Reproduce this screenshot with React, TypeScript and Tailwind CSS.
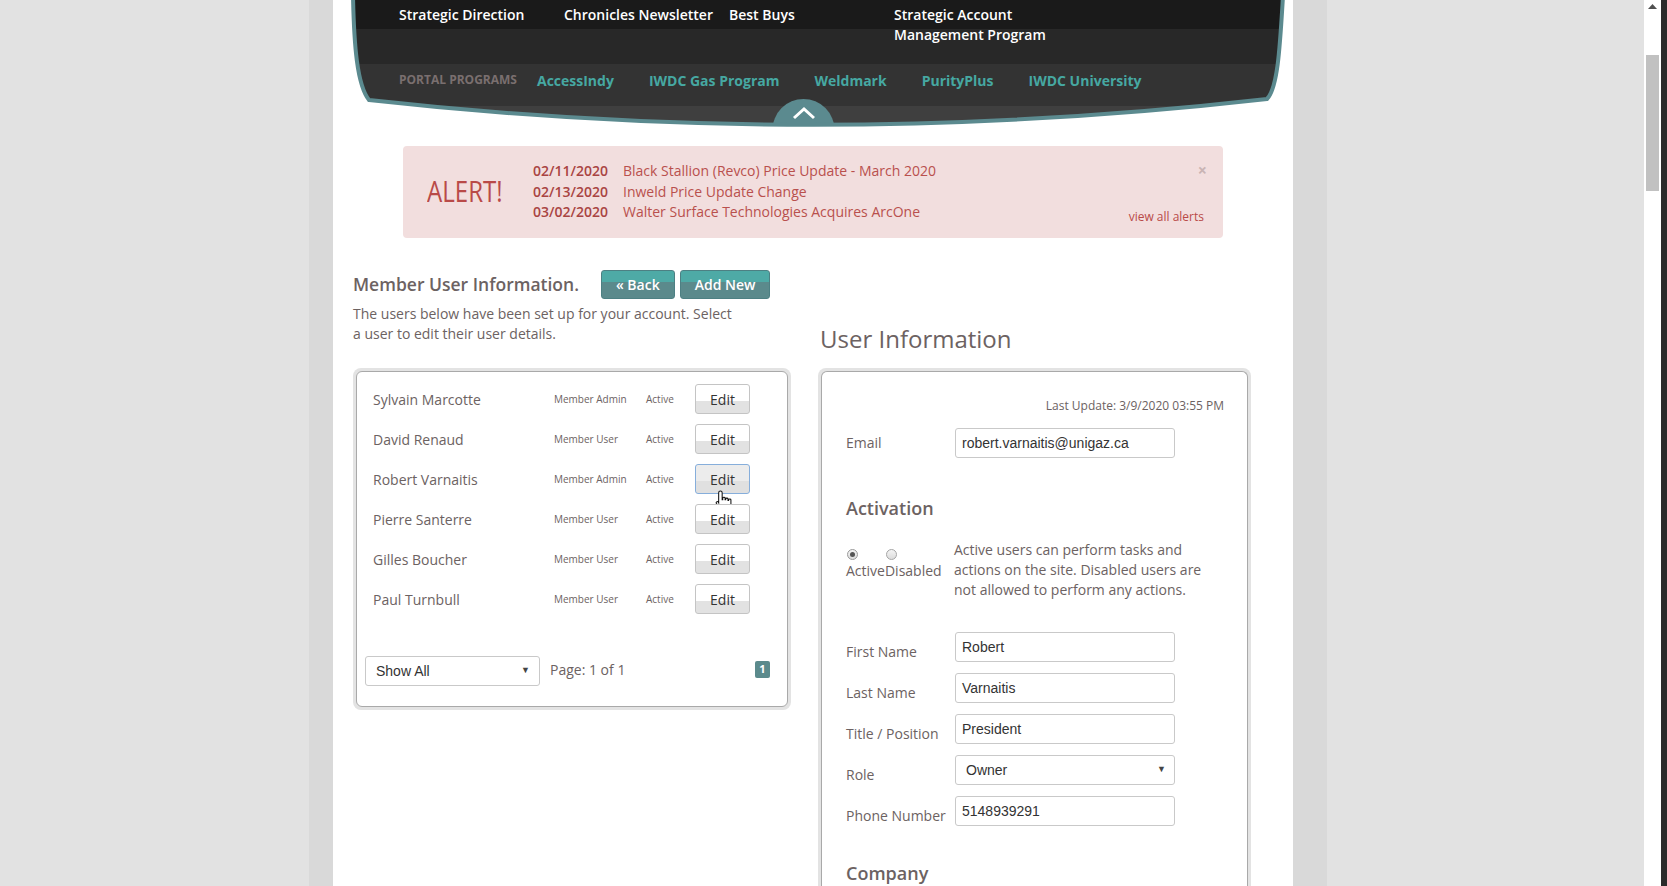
import React from 'react'

const users = [
  { name: 'Sylvain Marcotte', role: 'Member Admin' },
  { name: 'David Renaud', role: 'Member User' },
  { name: 'Robert Varnaitis', role: 'Member Admin', hover: true },
  { name: 'Pierre Santerre', role: 'Member User' },
  { name: 'Gilles Boucher', role: 'Member User' },
  { name: 'Paul Turnbull', role: 'Member User' },
]

const alerts = [
  { date: '02/11/2020', title: 'Black Stallion (Revco) Price Update - March 2020' },
  { date: '02/13/2020', title: 'Inweld Price Update Change' },
  { date: '03/02/2020', title: 'Walter Surface Technologies Acquires ArcOne' },
]

const programs = ['AccessIndy', 'IWDC Gas Program', 'Weldmark', 'PurityPlus', 'IWDC University']

const SHAPE = 'M20,-4 C21,45 24,85 36,100 Q484,150 934,99 C945,88 947,45 950,-4 Z'

function HeaderShape() {
  return (
    <svg className="absolute top-0 left-0" width="960" height="130" viewBox="0 0 960 130">
      <defs>
        <clipPath id="hdr">
          <path d={SHAPE} />
        </clipPath>
      </defs>
      <g clipPath="url(#hdr)">
        <rect x="0" y="-4" width="960" height="33" fill="#1a1a1a" />
        <rect x="0" y="29" width="960" height="35" fill="#282828" />
        <rect x="0" y="64" width="960" height="42" fill="#333333" />
        <rect x="0" y="106" width="960" height="30" fill="#3f3f3f" />
        <circle cx="470.5" cy="130" r="31" fill="#5b8a8f" />
        <polyline points="461,118 471,109 481,118" fill="none" stroke="#ffffff" strokeWidth="3" />
      </g>
      <path d={SHAPE} fill="none" stroke="#5b8a8f" strokeWidth="4" />
    </svg>
  )
}

function TealButton({ children }: { children: React.ReactNode }) {
  return (
    <button className="h-[29px] px-[14px] rounded-[3px] border border-[#4d8083] bg-[linear-gradient(to_bottom,#4eaaa6_0%,#4eaaa6_42%,#5b8a8c_42%,#5b8a8c_100%)] text-white text-[14px] font-semibold leading-none">
      {children}
    </button>
  )
}

function EditButton({ hover }: { hover?: boolean }) {
  return (
    <div className="relative">
      <button
        className={
          hover
            ? 'w-[55px] h-[30px] rounded-[3px] border border-[#86aedb] bg-[linear-gradient(to_bottom,#ececec_0%,#ececec_58%,#e0e0e0_58%,#e0e0e0_100%)] text-[14px] text-[#333]'
            : 'w-[55px] h-[30px] rounded-[3px] border border-[#c4c4c4] bg-[linear-gradient(to_bottom,#ffffff_0%,#ffffff_58%,#e2e2e2_58%,#e2e2e2_100%)] text-[14px] text-[#333]'
        }
      >
        Edit
      </button>
      {hover && (
        <svg className="absolute left-[19px] top-[25px]" width="21" height="24" viewBox="0 0 18 20">
          <path
            d="M5.5 1.5 C6.5 1.5 7 2 7 3 L7 9 L7.5 9 L7.5 7.5 C7.5 6.5 9.5 6.5 9.5 7.5 L9.5 9 L10 9 L10 8.3 C10 7.3 12 7.3 12 8.3 L12 9.5 L12.5 9.5 L12.5 9 C12.5 8 14.5 8 14.5 9 L14.5 13.5 C14.5 16 13 18.5 11 18.5 L8 18.5 C6.5 18.5 5.5 17.5 4.5 16 L2 12 C1.5 11 2.8 10 3.6 10.8 L4 11.5 L4 3 C4 2 4.5 1.5 5.5 1.5 Z"
            fill="#ffffff"
            stroke="#111"
            strokeWidth="0.9"
          />
        </svg>
      )}
    </div>
  )
}

function Field({ label, value, select, center }: { label: string; value: string; select?: boolean; center?: boolean }) {
  return (
    <div className={center ? 'flex items-center' : 'flex items-end'}>
      <span className="w-[109px] leading-[20px] text-[14px]">{label}</span>
      <div
        className={
          'w-[220px] h-[30px] rounded-[3px] border border-[#c9c9c9] bg-white flex items-center text-[14px] text-[#333] font-["Liberation_Sans",Arial,sans-serif] ' +
          (select ? 'pl-[10px] pr-[8px] justify-between' : 'pl-[6px]')
        }
      >
        <span>{value}</span>
        {select && <span className="text-[9px] text-[#444]">▼</span>}
      </div>
    </div>
  )
}

export default function App() {
  return (
    <div className="w-[1667px] h-[886px] overflow-hidden flex bg-[#e2e2e2] text-[#6c6262] font-['Open_Sans',sans-serif]">
      <div className="w-[309px] shrink-0" />
      <div className="w-[24px] shrink-0 bg-[#d9d9d9]" />

      {/* Main white column */}
      <div className="w-[960px] shrink-0 bg-white">
        {/* Header */}
        <header className="relative h-[126px]">
          <HeaderShape />
          <div className="relative pl-[66px] pt-[5px]">
            <div className="grid grid-cols-[165px_165px_165px_220px] text-white font-semibold text-[14px] leading-[20px]">
              <span>Strategic Direction</span>
              <span>Chronicles Newsletter</span>
              <span>Best Buys</span>
              <span>
                Strategic Account
                <br />
                Management Program
              </span>
            </div>
            <div className="mt-[25px] flex items-center h-[20px]">
              <span className="text-[12px] font-bold text-[#7a6f6f] mr-[20px]">PORTAL PROGRAMS</span>
              <div className="flex gap-[35px]">
                {programs.map((p) => (
                  <span key={p} className="text-[14px] font-bold text-[#46a8a2]">
                    {p}
                  </span>
                ))}
              </div>
            </div>
          </div>
        </header>

        {/* Alert */}
        <div className="ml-[70px] mt-[20px] w-[820px] h-[92px] rounded-[4px] bg-[#f2dede] flex items-center pl-[24px] pr-[19px]">
          <div className="w-[106px]">
            <span className="inline-block origin-left scale-x-[0.83] text-[29px] leading-none text-[#b94a48]">ALERT!</span>
          </div>
          <div className="flex flex-col text-[14px] leading-[20.5px]">
            {alerts.map((a) => (
              <div key={a.date} className="flex">
                <span className="w-[90px] font-semibold text-[#a94442]">{a.date}</span>
                <span className="text-[#b9504d]">{a.title}</span>
              </div>
            ))}
          </div>
          <div className="ml-auto self-stretch flex flex-col items-end justify-between pt-[16px] pb-[12px]">
            <span className="text-[16px] font-bold text-[#c9b4b4] leading-none mr-[-3px]">×</span>
            <span className="text-[12px] text-[#b94a48]">view all alerts</span>
          </div>
        </div>

        {/* Content */}
        <div className="flex px-[20px] mt-[32px]">
          {/* Left column */}
          <div className="w-[438px] shrink-0">
            <div className="h-[29px] flex items-center">
              <h2 className="text-[17.5px] font-semibold">Member User Information.</h2>
              <div className="ml-[22px] flex gap-[5px]">
                <TealButton>« Back</TealButton>
                <TealButton>Add New</TealButton>
              </div>
            </div>
            <p className="mt-[5px] text-[14px] leading-[20px]">
              The users below have been set up for your account. Select
              <br />a user to edit their user details.
            </p>

            <div className="mt-[24px] p-[3px] rounded-[8px] bg-[#e3e3e3]">
              <div className="rounded-[6px] border border-[#a9a9a9] bg-white pt-[12px] pb-[20px]">
                <div className="flex flex-col gap-[10px] pl-[16px]">
                  {users.map((u) => (
                    <div key={u.name} className="flex items-center h-[30px]">
                      <span className="w-[181px] text-[14px]">{u.name}</span>
                      <span className="w-[92px] text-[10px]">{u.role}</span>
                      <span className="w-[49px] text-[10px]">Active</span>
                      <EditButton hover={u.hover} />
                    </div>
                  ))}
                </div>
                <div className="mt-[42px] pl-[8px] pr-[17px] flex items-center">
                  <div className="w-[175px] h-[30px] rounded-[3px] border border-[#c9c9c9] flex items-center justify-between pl-[10px] pr-[9px] text-[14px] text-[#333] font-['Liberation_Sans',Arial,sans-serif]">
                    <span>Show All</span>
                    <span className="text-[9px] text-[#444]">▼</span>
                  </div>
                  <span className="ml-[10px] text-[14px] -mt-[3px]">Page: 1 of 1</span>
                  <span className="ml-auto -mt-[3px] w-[15px] h-[17px] rounded-[2px] bg-[#5b8a8c] text-white text-[11px] font-bold flex items-center justify-center">
                    1
                  </span>
                </div>
              </div>
            </div>
          </div>

          {/* Right column */}
          <div className="ml-[27px] w-[433px] shrink-0">
            <h2 className="mt-[53px] pl-[2px] text-[24px] leading-[32px]">User Information</h2>
            <div className="mt-[13px] p-[3px] pb-0 rounded-t-[8px] bg-[#e3e3e3]">
              <div className="rounded-t-[6px] border border-b-0 border-[#a9a9a9] bg-white pl-[24px] pr-[23px] pt-[25px] pb-[40px]">
                <div className="text-right text-[12px] leading-[17px]">Last Update: 3/9/2020 03:55 PM</div>
                <div className="mt-[14px]">
                  <Field label="Email" value="robert.varnaitis@unigaz.ca" center />
                </div>

                <h3 className="mt-[38px] text-[18px] font-semibold leading-[24px]">Activation</h3>
                <div className="mt-[20px] flex">
                  <div className="w-[108px] flex text-[14px] leading-[20px]">
                    <div className="flex flex-col items-start">
                      <span className="mt-[9px] ml-[1px] w-[11px] h-[11px] rounded-full border border-[#9a9a9a] bg-[linear-gradient(#f4f4f4,#dcdcdc)] flex items-center justify-center">
                        <span className="w-[5px] h-[5px] rounded-full bg-[#555]" />
                      </span>
                      <span className="mt-[1px]">Active</span>
                    </div>
                    <div className="flex flex-col items-start">
                      <span className="mt-[9px] ml-[1px] w-[11px] h-[11px] rounded-full border border-[#a5a5a5] bg-[linear-gradient(#f4f4f4,#dcdcdc)]" />
                      <span className="mt-[1px]">Disabled</span>
                    </div>
                  </div>
                  <p className="text-[14px] leading-[20px]">
                    Active users can perform tasks and
                    <br />
                    actions on the site. Disabled users are
                    <br />
                    not allowed to perform any actions.
                  </p>
                </div>

                <div className="mt-[32px] flex flex-col gap-[11px]">
                  <Field label="First Name" value="Robert" />
                  <Field label="Last Name" value="Varnaitis" />
                  <Field label="Title / Position" value="President" />
                  <Field label="Role" value="Owner" select />
                  <Field label="Phone Number" value="5148939291" />
                </div>

                <h3 className="mt-[35px] text-[18px] font-semibold leading-[24px]">Company</h3>
              </div>
            </div>
          </div>
        </div>
      </div>

      <div className="w-[34px] shrink-0 bg-[#d9d9d9]" />
      <div className="flex-1" />

      {/* Scrollbar */}
      <div className="w-[17px] shrink-0 bg-white flex flex-col items-center">
        <svg className="mt-[4px]" width="9" height="5" viewBox="0 0 9 5">
          <path d="M0 5 L4.5 0 L9 5 Z" fill="#505050" />
        </svg>
        <div className="mt-[46px] w-[13px] h-[136px] bg-[#c1c1c1]" />
      </div>
      <div className="w-[6px] shrink-0 bg-[#2b2b2b]" />
    </div>
  )
}
